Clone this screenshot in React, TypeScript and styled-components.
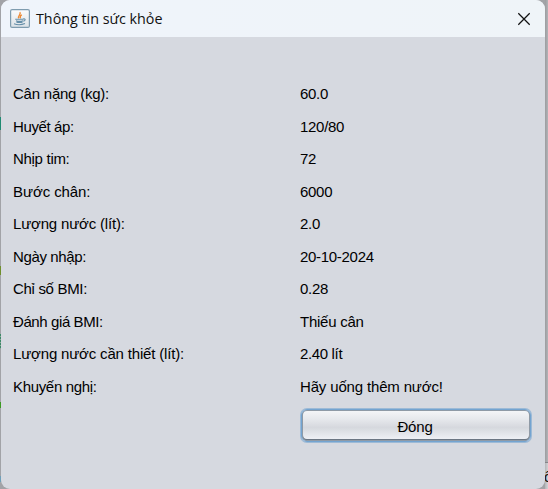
import React from "react";
import styled, { createGlobalStyle } from "styled-components";

const GlobalStyle = createGlobalStyle`
  * { box-sizing: border-box; }
  body { margin: 0; overflow: hidden; }
`;

const Desktop = styled.div`
  position: relative;
  width: 548px;
  height: 489px;
  padding: 0 3px 0 1px;
  overflow: hidden;
  background:
    linear-gradient(#1f8a72, #1f8a72) 0 117px / 1px 13px no-repeat,
    linear-gradient(#6f8f2c, #6f8f2c) 0 266px / 1px 9px no-repeat,
    repeating-linear-gradient(#3c8a68 0 2px, #8fa69b 2px 3px) 0 334px / 1px 15px no-repeat,
    linear-gradient(#3c9a22, #3c9a22) 0 402px / 1px 6px no-repeat,
    linear-gradient(#6f9fb8, #6f9fb8) 0 476px / 1px 6px no-repeat,
    linear-gradient(90deg, #9b9c9f, #b2b3b7) 545px 0 / 3px 462px no-repeat,
    linear-gradient(#85868a, #85868a) 545px 462px / 3px 1px no-repeat,
    linear-gradient(90deg, #b4b5b8, #d2d3d6) 545px 463px / 3px 26px no-repeat,
    #a2a3a7;
`;

const BackdropLetter = styled.span`
  position: absolute;
  left: 544px;
  top: 468px;
  font: 15px/18px "Liberation Sans", sans-serif;
  color: #15100c;
`;

const Dialog = styled.section`
  position: relative;
  height: 489px;
  border-radius: 9px;
  overflow: hidden;
  background: #d6d9e0;
`;

const TitleBar = styled.header`
  display: flex;
  align-items: center;
  height: 37px;
  padding: 0 14px 0 9px;
  background: linear-gradient(90deg, #eff4fb, #eff4f8);
`;

const Title = styled.h1`
  flex: 1;
  margin: 0 0 0 6px;
  font: 400 14.3px/20px "Open Sans", "Noto Sans", sans-serif;
  letter-spacing: 0;
  color: #111;
`;

const CloseButton = styled.button`
  display: flex;
  padding: 0;
  border: 0;
  background: none;
`;

const Details = styled.dl`
  display: grid;
  grid-template-columns: 287px 1fr;
  grid-auto-rows: 32.55px;
  margin: 0;
  padding: 41px 0 0 12px;
  font: 15px/32px "Liberation Sans", Arial, sans-serif;
  color: #000;
`;

const Cell = styled.dt<{ $spacing: number }>`
  margin: 0;
  white-space: nowrap;
  letter-spacing: ${({ $spacing }) => $spacing}px;
`;

const Actions = styled.footer`
  display: flex;
  padding: 5.5px 14px 0 300px;
`;

const ActionButton = styled.button`
  flex: 1;
  height: 33px;
  padding: 3px 2px 0 0;
  border: 1px solid #73a4d1;
  border-radius: 6px;
  background: linear-gradient(#f6f7f9 0%, #e6e8ec 30%, #d6d8de 56%, #d9dce1 62%, #f2f4f9 100%);
  box-shadow: inset 0 0 0 1px #8f9aa6, inset 0 -1px 0 1px #6b7683, 0 0 0 1px #9dbad6;
  font: 15px/18px "Liberation Sans", Arial, sans-serif;
  letter-spacing: -0.2px;
  color: #000;
`;

const JavaIcon = () => (
  <svg width="20" height="19" viewBox="0 0 20 19" fill="none">
    <defs>
      <linearGradient id="tile" x2="0" y2="1">
        <stop stopColor="#fbfcfd" />
        <stop offset="1" stopColor="#dce2e7" />
      </linearGradient>
    </defs>
    <rect x=".6" y=".6" width="18.8" height="17.8" rx="1.5" fill="url(#tile)" stroke="#7f9caf" strokeWidth="1.2" />
    <path d="M8.8 9.2C6.8 7.3 11.5 6 9.9 3.2M11.9 5.8C9 7 11.3 7.5 9.9 9.3" stroke="#ee8a35" strokeWidth="1.4" />
    <path d="M5.2 10.2h8M6 11.7c2 .8 5 .8 7 0M6.5 13.1c2 .6 4 .6 6 0M13 10c3-.8 2.6 1.8.3 2.1M4 14.8c2.8 1 8 .9 11-.3" stroke="#668fa9" strokeWidth="1.1" />
  </svg>
);

type Entry = { label: string; value: string; labelSpacing: number; valueSpacing: number };

const rows: Entry[] = [
  { label: "Cân nặng (kg):", value: "60.0", labelSpacing: -0.23, valueSpacing: -0.3 },
  { label: "Huyết áp:", value: "120/80", labelSpacing: -0.38, valueSpacing: -0.3 },
  { label: "Nhịp tim:", value: "72", labelSpacing: -0.3, valueSpacing: -0.3 },
  { label: "Bước chân:", value: "6000", labelSpacing: -0.08, valueSpacing: -0.3 },
  { label: "Lượng nước (lít):", value: "2.0", labelSpacing: -0.18, valueSpacing: -0.3 },
  { label: "Ngày nhập:", value: "20-10-2024", labelSpacing: -0.38, valueSpacing: -0.3 },
  { label: "Chỉ số BMI:", value: "0.28", labelSpacing: -0.32, valueSpacing: -0.3 },
  { label: "Đánh giá BMI:", value: "Thiếu cân", labelSpacing: -0.4, valueSpacing: -0.24 },
  { label: "Lượng nước cần thiết (lít):", value: "2.40 lít", labelSpacing: -0.17, valueSpacing: -0.35 },
  { label: "Khuyến nghị:", value: "Hãy uống thêm nước!", labelSpacing: -0.33, valueSpacing: -0.16 },
];

export default function App() {
  return (
    <>
      <GlobalStyle />
      <Desktop>
        <BackdropLetter>ố</BackdropLetter>
        <Dialog>
          <TitleBar>
            <JavaIcon />
            <Title>Thông tin sức khỏe</Title>
            <CloseButton aria-label="Đóng">
              <svg width="14" height="14" viewBox="0 0 14 14">
                <path d="M1.3 1.3 12.7 12.7M12.7 1.3 1.3 12.7" stroke="#111" strokeWidth="1.25" />
              </svg>
            </CloseButton>
          </TitleBar>
          <Details>
            {rows.map(({ label, value, labelSpacing, valueSpacing }) => (
              <React.Fragment key={label}>
                <Cell $spacing={labelSpacing}>{label}</Cell>
                <Cell as="dd" $spacing={valueSpacing}>{value}</Cell>
              </React.Fragment>
            ))}
          </Details>
          <Actions>
            <ActionButton>Đóng</ActionButton>
          </Actions>
        </Dialog>
      </Desktop>
    </>
  );
}
